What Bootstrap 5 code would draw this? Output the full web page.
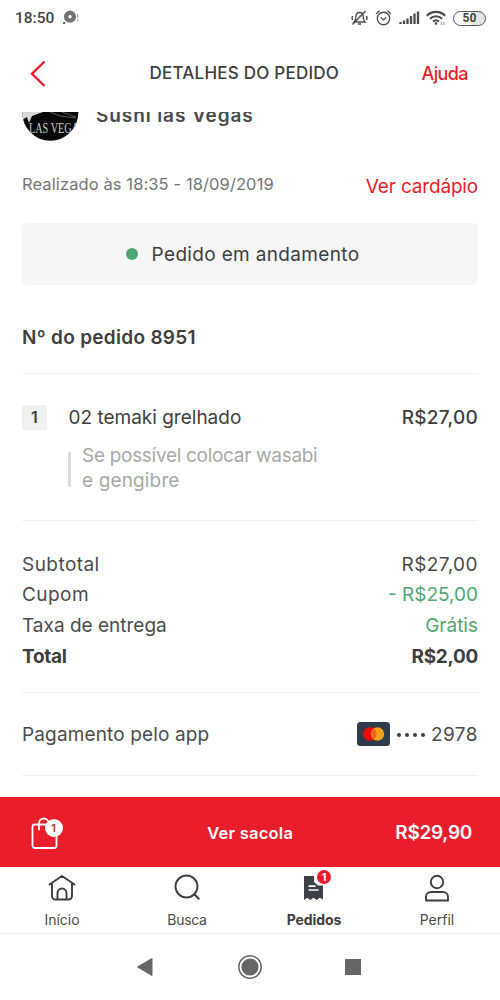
<!DOCTYPE html>
<html lang="pt-BR">
<head>
<meta charset="utf-8">
<meta name="viewport" content="width=device-width, initial-scale=1">
<title>Detalhes do pedido</title>
<link href="https://cdn.jsdelivr.net/npm/bootstrap@5.3.0/dist/css/bootstrap.min.css" rel="stylesheet">
<style>
  :root { --ink:#3f3e3e; --red:#ea1d2c; --green:#50a773; --line:#f0f0f0; }
  body { width:500px; height:1000px; overflow:hidden; background:#fff; color:var(--ink);
         font-family:Inter,"Liberation Sans",sans-serif; font-size:19px; line-height:24px; }
  svg { display:block; flex:none; overflow:visible; }
  .statusbar { height:36px; padding:0 14px 0 15px; }
  .status-icons { gap:7px; }
  .clock { font:500 15.5px/20px Roboto,sans-serif; color:#444; }
  .battery { width:33px; height:15px; border:1.6px solid #555; border-radius:8px; background:linear-gradient(90deg,#fff 55%,#e4e4e4 55%);
             font:700 12px/13px Roboto,sans-serif; color:#444; }
  .topbar { height:76px; padding:0 32px 0 30px; }
  .topbar-title { font-size:17px; font-weight:500; letter-spacing:.24px; margin-left:21px; padding-bottom:2px; }
  .help { font-size:18px; font-weight:500; letter-spacing:-.6px; }
  .brand-red { color:var(--red); }
  .brand-green { color:var(--green); }
  .scroller { height:685px; padding:0 22px; overflow:hidden; }
  .store { height:56px; margin-top:-27px; }
  .store-name { font-size:19px; letter-spacing:.9px; color:#4a4a4a; margin-left:18px; padding-top:5px; }
  .avatar text { font:400 15px "Liberation Serif",serif; }
  .meta-row { height:82px; padding-top:31px; }
  .meta-date { font-size:16.5px; letter-spacing:.1px; color:#757575; }
  .menu-link { padding-top:3px; letter-spacing:-.17px; }
  .status-box { height:62px; border-radius:5px; background:#f6f6f6; gap:14px; letter-spacing:.34px; padding:1px 15px 0 0; }
  .dot { width:12px; height:12px; margin-top:-1px; background:var(--green); }
  .order-no { height:89px; padding-top:18px; border-bottom:1.5px solid var(--line); letter-spacing:.3px; }
  .item-block { height:146.5px; padding-top:31px; border-bottom:1.5px solid var(--line); }
  .item-line { padding-top:1px; }
  .qty { width:25px; height:25px; margin-top:-1px; background:#f0f0f0; border-radius:2px; font-size:16px; margin-right:21.5px; }
  .note { margin:13px 0 0 46px; color:#a9a9a9; line-height:24.5px; gap:11px; letter-spacing:-.3px; }
  .note-bar { width:3px; height:35px; background:#dcdcdc; margin-top:9px; }
  .note-text { padding-top:1px; }
  .totals { height:172px; padding-top:29px; border-bottom:1.5px solid var(--line); line-height:30.7px; }
  .payment { height:83px; border-bottom:1.5px solid var(--line); }
  .payment > span { padding-top:2px; }
  .ls-1 { letter-spacing:.14px; } .ls-2 { letter-spacing:.25px; } .ls-4 { letter-spacing:.45px; } .ls-n { letter-spacing:-.3px; }
  .soft-ink { color:#4c4b4b; }
  .mini-dots { gap:3.9px; margin:0 6px 0 7px; }
  .mini-dots i { width:4px; height:4px; border-radius:50%; background:var(--ink); }
  .bagbar { height:69.5px; background:var(--red); padding:3px 28px 0 31px; }
  .bagbar-label { font-size:16.5px; letter-spacing:.25px; margin-left:47px; }
  .tabs { height:67.5px; border-bottom:1.5px solid #ededed; font-size:14px; line-height:18px; }
  .tab-item { padding:6px 1px 0 0; gap:8px; width:125px; }
  .icon-badge { position:absolute; top:-3px; left:13px; width:14px; height:14px; background:var(--red); color:#fff; font-size:11px; line-height:14px; }
  .bag-badge { position:absolute; top:2px; left:13.5px; width:18px; height:18px; background:#fff; color:#b52a34; font-size:11px; line-height:18px; }
  .bag { margin-top:2px; }
  .sysnav { height:65px; padding-left:136px; }
</style>
</head>
<body>
<header>
  <div class="statusbar d-flex align-items-center justify-content-between">
    <div class="d-flex align-items-center">
      <span class="clock">18:50</span>
      <svg class="ms-2" width="18" height="16" viewBox="0 0 18 16"><circle cx="8" cy="6.700" r="3.900" fill="#fff" stroke="#737373" stroke-width="4.400"/><circle cx="8" cy="6.700" r="1" fill="#fff"/><rect x="1.200" y="12" width="2" height="2" fill="#555"/><path d="M15.700 4v4M15.700 9.500v1.500" stroke="#aaa" stroke-width="1.300"/></svg>
    </div>
    <div class="status-icons d-flex align-items-center">
      <svg width="17" height="17" viewBox="0 0 17 17" fill="none" stroke="#505050" stroke-width="1.400"><path d="M3 12c1.500-1.200 1.800-2.700 1.800-5C4.800 4.200 6 2.500 8.500 2.500s3.800 1.700 3.800 4.500c0 2.300.3 3.800 1.800 5zM7 14h3M1.600 6l-.6 2 .6 2M15.500 6l.6 2-.6 2M14.500 1L1.500 14.500"/></svg>
      <svg width="17" height="17" viewBox="0 0 17 17" fill="none" stroke="#505050" stroke-width="1.400"><circle cx="8.500" cy="8.500" r="6.200"/><path d="M5.800 7.500l2.700 2.300 2.700-2.300M1 4L4.500.8M16 4L12.500.8"/></svg>
      <svg width="20" height="16" viewBox="0 0 20 16" stroke="#4b4b4b" stroke-width="2.300"><path d="M1.500 14v-2M5 14v-3.500M8.500 14V8.500M12 14V6M15.500 14V3.500M19 14V1.500"/></svg>
      <svg width="20" height="16" viewBox="0 0 20 16" fill="none" stroke="#4b4b4b" stroke-width="2.100"><path d="M.8 5.700a13 13 0 0 1 18.400 0M4 8.800a8.500 8.500 0 0 1 12 0M7 11.600a4.500 4.500 0 0 1 6 0"/><circle cx="10" cy="13.500" r="1.300" fill="#4b4b4b" stroke="none"/><path d="M15.500 12v3M18 12v3" stroke="#999" stroke-width="1.200"/></svg>
      <span class="battery text-center">50</span>
    </div>
  </div>
  <nav class="topbar d-flex align-items-center justify-content-between">
    <svg width="16" height="27" viewBox="0 0 16 27" fill="none" stroke="#ea1d2c" stroke-width="2.400"><path d="M14.500 .5L2 12.800 14.500 25"/></svg>
    <span class="topbar-title">DETALHES DO PEDIDO</span>
    <a class="help brand-red text-decoration-none">Ajuda</a>
  </nav>
</header>

<main class="scroller">
  <div class="store d-flex align-items-center">
    <svg class="avatar" width="56" height="56" viewBox="0 0 56 56">
      <defs><clipPath id="disc"><circle cx="28.300" cy="27.800" r="28"/></clipPath></defs>
      <g clip-path="url(#disc)"><rect width="57" height="56" fill="#080808"/>
        <path d="M0 27h21L10 31 7 38 5 32 0 35z" fill="#d8d8d8"/><path d="M28 27l10 4 16 2M40 27l14 5" stroke="#555" stroke-width="1" fill="none"/>
        <text x="7" y="47.500" textLength="50" lengthAdjust="spacingAndGlyphs" fill="#c9c9c9">LAS VEGA</text></g>
    </svg>
    <span class="store-name fw-semibold">Sushi las Vegas</span>
  </div>
  <div class="meta-row d-flex justify-content-between">
    <span class="meta-date">Realizado às 18:35 - 18/09/2019</span>
    <a class="menu-link brand-red text-decoration-none">Ver cardápio</a>
  </div>
  <div class="status-box d-flex align-items-center justify-content-center"><span class="dot rounded-circle"></span>Pedido em andamento</div>
  <div class="order-no d-flex align-items-center fw-semibold">Nº do pedido 8951</div>

  <section class="item-block">
    <div class="d-flex align-items-center">
      <span class="qty fw-semibold d-flex align-items-center justify-content-center">1</span>
      <span class="item-line flex-grow-1">02 temaki grelhado</span>
      <span class="item-line ls-2" style="font-weight:500">R$27,00</span>
    </div>
    <div class="note d-flex"><span class="note-bar"></span><span class="note-text">Se possível colocar wasabi<br><span class="ls-1">e gengibre</span></span></div>
  </section>

  <section class="totals">
    <div class="d-flex justify-content-between soft-ink"><span class="ls-4">Subtotal</span><span class="ls-4">R$27,00</span></div>
    <div class="d-flex justify-content-between soft-ink"><span class="ls-4">Cupom</span><span class="brand-green">- R$25,00</span></div>
    <div class="d-flex justify-content-between soft-ink"><span>Taxa de entrega</span><span class="brand-green">Grátis</span></div>
    <div class="d-flex justify-content-between fw-bold"><span class="ls-n">Total</span><span class="ls-n">R$2,00</span></div>
  </section>

  <section class="payment d-flex align-items-center soft-ink">
    <span class="flex-grow-1 ls-1">Pagamento pelo app</span>
    <svg width="33" height="24" viewBox="0 0 33 24"><rect width="33" height="24" rx="3.500" fill="#2f3a4a"/><circle cx="12.800" cy="12" r="6.700" fill="#eb0d0b"/><circle cx="20.500" cy="12" r="6.700" fill="#f79e1b"/><path d="M16.650 6.500a6.700 6.700 0 0 1 0 11 6.700 6.700 0 0 1 0-11z" fill="#f2661c"/></svg>
    <span class="mini-dots d-flex"><i></i><i></i><i></i><i></i></span>
    <span class="ls-4">2978</span>
  </section>
</main>

<footer>
  <div class="bagbar d-flex align-items-center justify-content-between text-white fw-semibold">
    <span class="bag position-relative">
      <svg width="27" height="34" viewBox="0 0 27 34" fill="none" stroke="#fff" stroke-width="1.800" stroke-linecap="round"><rect x="1.500" y="7.500" width="24" height="23.500" rx="2.500"/><path d="M8 12.500V6.300a4.800 4.800 0 0 1 9.600 0v3"/></svg>
      <span class="bag-badge rounded-circle text-center">1</span>
    </span>
    <span class="bagbar-label">Ver sacola</span>
    <span class="ls-n">R$29,90</span>
  </div>
  <div class="tabs d-flex">
    <div class="tab-item d-flex flex-column align-items-center soft-ink">
      <svg width="28" height="30" viewBox="0 0 28 30" fill="none" stroke="#3f3e3e" stroke-width="1.900" stroke-linecap="round" stroke-linejoin="round"><path d="M1.500 11.500L14 3 26.500 11.500M4 10.200V23a3.500 3.500 0 0 0 3.500 3.500h13A3.500 3.500 0 0 0 24 23V10.200M9.500 26.500v-6.500a4.500 4.500 0 0 1 9 0v6.500"/></svg>
      <span>Início</span>
    </div>
    <div class="tab-item d-flex flex-column align-items-center soft-ink">
      <svg width="28" height="30" viewBox="0 0 28 30" fill="none" stroke="#3f3e3e" stroke-width="1.900" stroke-linecap="round"><circle cx="13.500" cy="13.500" r="11"/><path d="M21.500 21.500l4.200 4.200" stroke-width="2.200"/></svg>
      <span style="letter-spacing:-.3px">Busca</span>
    </div>
    <div class="tab-item d-flex flex-column align-items-center fw-bold">
      <span class="position-relative ms-1">
        <svg width="20" height="30" viewBox="0 0 20 30"><path d="M0 3h10v6l4 3.500h5v14l-3.200-1.700-3.100 2.300-3.200-2.300-3.200 2.300-3.100-2.300L0 27z" fill="#3d3f44"/><path d="M4.500 13.200h7M4.500 17h10" stroke="#fff" stroke-width="1.700"/></svg>
        <span class="icon-badge rounded-circle text-center">1</span>
      </span>
      <span class="ps-1" style="letter-spacing:-.1px">Pedidos</span>
    </div>
    <div class="tab-item d-flex flex-column align-items-center soft-ink">
      <svg width="28" height="30" viewBox="0 0 28 30" fill="none" stroke="#3f3e3e" stroke-width="1.900"><circle cx="14" cy="9" r="6.200"/><path d="M3 27.500V24a5 5 0 0 1 5-5h12a5 5 0 0 1 5 5v3.500z" stroke-linejoin="round"/></svg>
      <span>Perfil</span>
    </div>
  </div>
  <div class="sysnav d-flex align-items-center">
    <svg width="17" height="20" viewBox="0 0 17 20"><path d="M16 1.500v17L1.500 10z" fill="#666" stroke="#666" stroke-linejoin="round"/></svg>
    <svg style="margin-left:84.500px" width="24" height="24" viewBox="0 0 24 24"><circle cx="12" cy="12" r="11.200" fill="none" stroke="#666" stroke-width="1.500"/><circle cx="12" cy="12" r="8.600" fill="#666"/></svg>
    <svg style="margin-left:83.500px" width="16" height="16"><rect width="16" height="16" fill="#666"/></svg>
  </div>
</footer>
<script src="https://cdn.jsdelivr.net/npm/bootstrap@5.3.0/dist/js/bootstrap.bundle.min.js"></script>
</body>
</html>
